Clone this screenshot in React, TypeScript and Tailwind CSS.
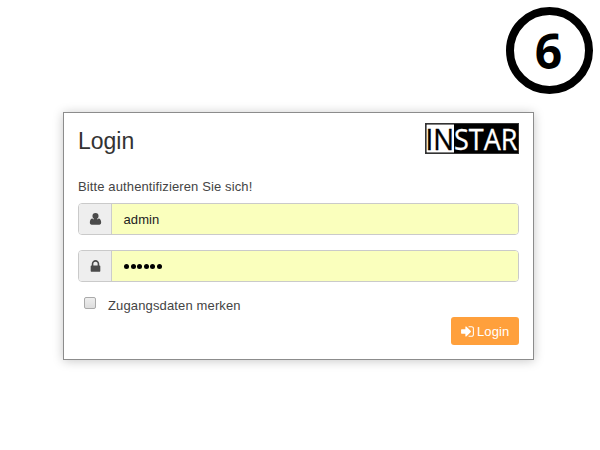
import React from "react";

const USER =
  "M896 110a365 365 0 0 1 365 365a365 365 0 0 1-730 0a365 365 0 0 1 365-365z M530 770q120 150 366 150t366-150c210 10 310 220 310 480 0 170-85 260-220 260h-912c-135 0-220-90-220-260 0-260 100-470 310-480z M700 780h392v200h-392z";
const LOCK =
  "M640 768h512v-192q0-106-75-181t-181-75-181 75-75 181v192zm832 96v576q0 40-28 68t-68 28h-960q-40 0-68-28t-28-68v-576q0-40 28-68t68-28h32v-192q0-184 132-316t316-132 316 132 132 316v192h32q40 0 68 28t28 68z";
const SIGN_IN =
  "M1312 896q0 26-19 45l-544 544q-19 19-45 19t-45-19-19-45v-288h-448q-26 0-45-19t-19-45v-384q0-26 19-45t45-19h448v-288q0-26 19-45t45-19 45 19l544 544q19 19 19 45zm352-352v704q0 119-84.5 203.5t-203.5 84.5h-320q-13 0-22.5-9.5t-9.5-22.5q0-4-1-20t-.5-26.5 3-23.5 10-19.5 20.5-6.5h320q66 0 113-47t47-113v-704q0-66-47-113t-113-47h-312l-11.5-1-11.5-3-8-5.5-7-9-2-13.5q0-4-1-20t-.5-26.5 3-23.5 10-19.5 20.5-6.5h320q119 0 203.5 84.5t84.5 203.5z";

function Icon({ path, className }: { path: string; className: string }) {
  return (
    <svg viewBox="0 0 1792 1792" fill="currentColor" className={className} aria-hidden="true">
      <path d={path} />
    </svg>
  );
}

function Field({ icon, iconClass, children }: { icon: string; iconClass: string; children: React.ReactNode }) {
  return (
    <div className="flex h-8 overflow-hidden rounded border border-[#cacaca]">
      <div className="flex w-[33px] shrink-0 items-center justify-center border-r border-[#cccccc] bg-[#eeeeee] text-[#4b4b4b]">
        <Icon path={icon} className={iconClass} />
      </div>
      <div className="flex flex-1 items-center bg-[#faffbd] pl-[11px] text-[13px] text-[#222222]">
        {children}
      </div>
    </div>
  );
}

export default function App() {
  return (
    <div className="flex h-[450px] w-[600px] flex-col bg-white font-['Liberation_Sans',Arial,sans-serif] text-[#444444]">
      <div className="mt-[7px] mr-[7px] flex size-[87px] shrink-0 items-center justify-center self-end rounded-full border-8 border-black font-['Noto_Sans','Open_Sans',sans-serif] text-[48px] leading-none font-bold text-black">
        <span className="-translate-x-px">6</span>
      </div>
      <main className="mt-[18px] ml-[63px] flex h-[248px] w-[471px] shrink-0 flex-col border border-[#8c8c8c] bg-white px-[14px] shadow-[0_1px_10px_rgba(0,0,0,0.22)]">
        <header className="flex h-[43px] items-start justify-between">
          <h1 className="mt-[13px] text-[23px] leading-[30px] text-[#333333]">Login</h1>
          <svg viewBox="0 0 94 31" className="mt-[10px] h-[31px] w-[94px] overflow-visible">
            <rect x="0.5" y="0.5" width="93" height="30" fill="black" stroke="#333333" />
            <rect x="1.5" y="1.5" width="27.5" height="28" fill="white" />
            <text x="0.5" y="26.5" textLength="28.5" lengthAdjust="spacingAndGlyphs" fontFamily="Open Sans" fontSize="29" fill="black" stroke="black" strokeWidth="0.4">IN</text>
            <text x="29" y="26.5" textLength="63.5" lengthAdjust="spacingAndGlyphs" fontFamily="Open Sans" fontSize="29" fill="white" stroke="white" strokeWidth="0.3">STAR</text>
          </svg>
        </header>
        <p className="mt-[22px] mb-[7px] text-[13px] leading-[18px] tracking-[0.12px]">Bitte authentifizieren Sie sich!</p>
        <div className="flex flex-col gap-[15px]">
          <Field icon={USER} iconClass="size-[15px]">
            <span className="pt-px pl-[0.5px] tracking-[0.1px]">admin</span>
          </Field>
          <Field icon={LOCK} iconClass="size-[15px]">
            <span className="ml-px flex gap-[1.6px]">
              {[0, 1, 2, 3, 4, 5].map((i) => (
                <i key={i} className="size-[5px] rounded-full bg-black" />
              ))}
            </span>
          </Field>
        </div>
        <label className="mt-[15px] flex h-4 items-start pl-[6px] text-[13px] leading-4">
          <span className="size-[12px] rounded-[2px] border border-[#aaaaaa] bg-linear-to-b from-[#eeeeee] to-[#dddddd]" />
          <span className="mt-px ml-[12px] tracking-[0.14px]">Zugangsdaten merken</span>
        </label>
        <button className="mt-[4px] flex h-7 w-[68px] items-center gap-[2px] self-end rounded-[3px] bg-[#ffa03c] pl-[9px] text-[13px] text-white">
          <Icon path={SIGN_IN} className="size-[15px]" />
          <span className="pt-px tracking-[0.1px]">Login</span>
        </button>
      </main>
    </div>
  );
}
